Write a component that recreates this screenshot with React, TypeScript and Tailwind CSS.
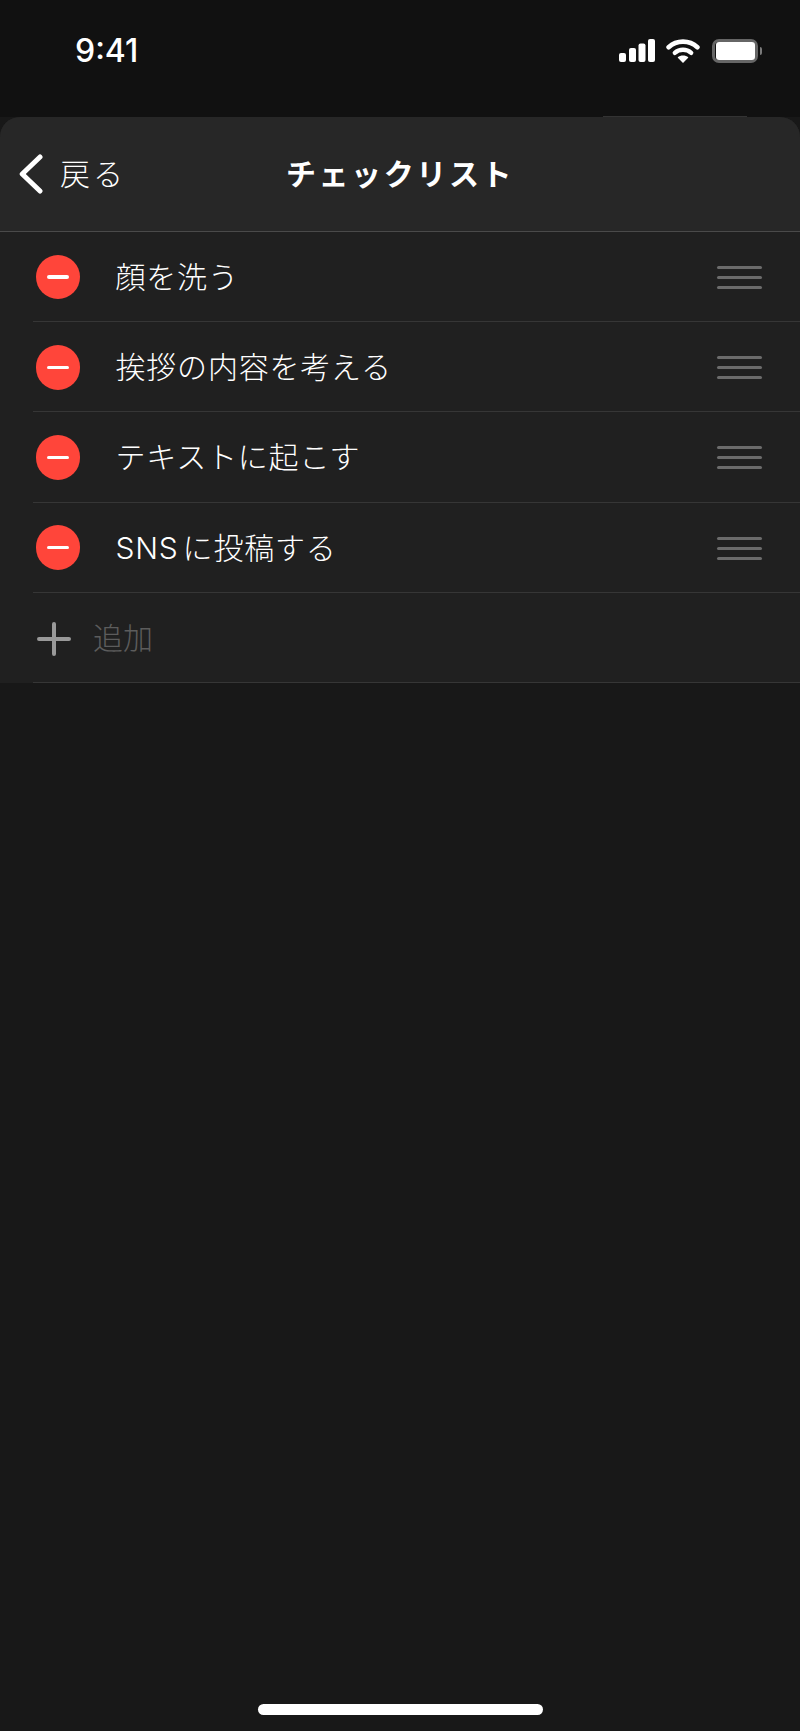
const ITEMS = [
  { latin: "", text: "顔を洗う" },
  { latin: "", text: "挨拶の内容を考える" },
  { latin: "", text: "テキストに起こす" },
  { latin: "SNS", text: "に投稿する" },
];

const FONT = "font-['Inter','Noto_Sans_CJK_JP',sans-serif]";

function StatusIcons() {
  return (
    <div className="flex items-center">
      <svg width="36" height="24" viewBox="0 0 36 24" fill="#fff">
        <rect x="0" y="14" width="7" height="9" rx="2" />
        <rect x="10" y="9" width="7" height="14" rx="2" />
        <rect x="19.5" y="4.5" width="7" height="18.5" rx="2" />
        <rect x="29" y="0" width="7" height="23" rx="2" />
      </svg>
      <svg className="ml-[11px]" width="34" height="26" viewBox="0 0 34 26" fill="none">
        <path d="M2.6 9.2C10.6 1.8 23.4 1.8 31.4 9.2" stroke="#fff" strokeWidth="4.6" strokeLinecap="round" />
        <path d="M8.8 14.8C13.4 10.8 20.6 10.8 25.2 14.8" stroke="#fff" strokeWidth="4.4" strokeLinecap="round" />
        <path d="M11.6 19.4C14.6 16.8 19.4 16.8 22.4 19.4L17 25Z" fill="#fff" />
      </svg>
      <div className="ml-[12px] flex items-center">
        <div className="flex h-[24px] w-[46px] items-center justify-center rounded-[7px] border-[3px] border-[#666666]">
          <div className="h-[17.5px] w-[39px] rounded-[3px] bg-white" />
        </div>
        <div className="ml-[2px] h-[8px] w-[2px] rounded-r-sm bg-[#7a7a7a]" />
      </div>
    </div>
  );
}

function MinusBadge() {
  return (
    <div className="ml-[2.5px] mt-[1px] flex h-[44.5px] w-[44.5px] shrink-0 items-center justify-center rounded-full bg-[#ff453a]">
      <div className="h-[3.5px] w-[22px] rounded-full bg-white" />
    </div>
  );
}

function DragHandle() {
  return (
    <div className="ml-auto mr-[38px] mt-[2px] flex w-[45px] flex-col gap-[7px]">
      <div className="h-[3px] rounded-full bg-[#6b6b6b]" />
      <div className="h-[3px] rounded-full bg-[#6b6b6b]" />
      <div className="h-[3px] rounded-full bg-[#6b6b6b]" />
    </div>
  );
}

export default function App() {
  return (
    <div className={`flex h-[1731px] w-[800px] flex-col overflow-hidden bg-[#181818] text-white ${FONT}`}>
      <div className="flex h-[117px] shrink-0 items-start justify-between bg-[#111111] pl-[75px] pr-[38px] pt-[31px]">
        <span className="text-[32px] font-medium leading-[39px]">9:41</span>
        <div className="pt-[7px]">
          <StatusIcons />
        </div>
      </div>

      <div className="relative shrink-0 rounded-t-[20px] bg-[#202020]">
        <div className="absolute left-[603px] top-[-1px] h-px w-[144px] bg-[#333333]" />
        <header className="grid h-[115px] grid-cols-[1fr_auto_1fr] items-center rounded-t-[20px] border-b border-[#4a4a4a] bg-[#272727]">
          <div className="flex items-center pl-[19px]">
            <svg width="24" height="40" viewBox="0 0 24 40" fill="none">
              <path d="M21 3L3.2 20L21 37" stroke="#fff" strokeWidth="5" strokeLinecap="round" strokeLinejoin="round" />
            </svg>
            <span className="ml-[17px] text-[30px] font-light tracking-[3px] text-white">戻る</span>
          </div>
          <h1 className="text-[30px] font-bold tracking-[2.6px]">チェックリスト</h1>
          <div />
        </header>

        <ul className="pl-[33px]">
          {ITEMS.map((item) => (
            <li key={item.text} className="flex h-[90.2px] items-center border-b border-[#363636]">
              <MinusBadge />
              <span className="ml-[35.5px] pt-[2px] text-[30px] font-light tracking-[0.8px] text-white">
                {item.latin && <span className="mr-[4px]">{item.latin}</span>}
                {item.text}
              </span>
              <DragHandle />
            </li>
          ))}
          <li className="flex h-[90px] items-center border-b border-[#363636]">
            <svg className="ml-[4px] mt-[3px]" width="34" height="34" viewBox="0 0 34 34" fill="none">
              <path d="M17 2V32M2 17H32" stroke="#999999" strokeWidth="4" strokeLinecap="round" />
            </svg>
            <span className="ml-[22px] pt-[2px] text-[30px] font-light text-[#5c5c5c]">追加</span>
          </li>
        </ul>
      </div>

      <div className="mx-auto mb-[16px] mt-auto h-[11px] w-[285px] rounded-full bg-white" />
    </div>
  );
}
